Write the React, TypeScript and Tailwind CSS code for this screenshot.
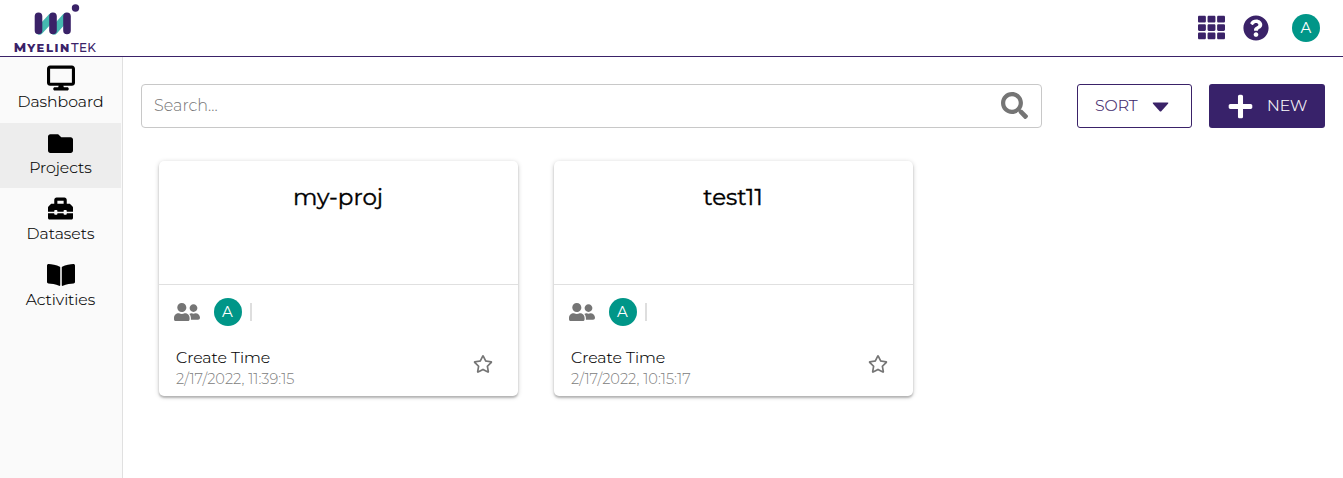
import React from 'react';
import { FaBookOpen, FaFolder, FaToolbox, FaTh, FaQuestionCircle, FaSearch, FaPlus, FaUserFriends, FaRegStar } from 'react-icons/fa';
import { FaDisplay } from 'react-icons/fa6';

function Logo() {
  return (
    <div className="flex w-[110px] flex-col items-center pt-[4px]">
      <svg width="46" height="32" viewBox="0 0 46 32" className="ml-[4px] block">
        <path d="M5.500 26.500 L18 13" stroke="#45b8b0" strokeWidth="8" strokeLinecap="round" />
        <path d="M20 26.500 L32 13" stroke="#45b8b0" strokeWidth="8" strokeLinecap="round" />
        <path d="M4.500 12.300V26.500M19 12.300V26.500M33 12.300V26.500" stroke="#3a2268" strokeWidth="7.600" strokeLinecap="round" />
        <circle cx="41.500" cy="4" r="3.700" fill="#3a2268" />
      </svg>
      <div className="mt-[4px] flex h-[14px] items-baseline whitespace-nowrap leading-[14px] text-[#3a2268]">
        <span className="text-[13px] font-extrabold tracking-[0.9px]">M</span>
        <span className="text-[11.5px] font-extrabold tracking-[1.6px]">YELIN</span>
        <span className="text-[13px] font-medium tracking-[0.3px]">T</span>
        <span className="text-[12px] font-medium tracking-[0.3px]">EK</span>
      </div>
    </div>
  );
}

function Avatar() {
  return (
    <div className="flex h-7 w-7 items-center justify-center rounded-full bg-[#009688] text-[15px] text-white">A</div>
  );
}

type NavItemProps = { label: string; icon: React.ReactNode; active?: boolean };

function NavItem({ label, icon, active }: NavItemProps) {
  return (
    <a className={`mb-px flex h-[65px] w-[121px] flex-col items-center pt-[8px] ${active ? 'bg-[#ededed]' : ''}`}>
      <span className="flex h-[26px] items-center">{icon}</span>
      <span className="text-[15.7px] leading-[22px] font-light text-black [-webkit-text-stroke:0.15px_currentColor]">{label}</span>
    </a>
  );
}

type CardProps = { title: string; date: string };

function ProjectCard({ title, date }: CardProps) {
  return (
    <article className="flex h-[235px] w-[359px] flex-col rounded-[5px] bg-white shadow-[0_2px_2px_rgba(0,0,0,0.2),0_1px_5px_rgba(0,0,0,0.2)]">
      <div className="h-[124px] border-b border-[#e0e0e0] pt-[20px] text-center">
        <h2 className="text-[23px] leading-[32px] font-normal text-black [-webkit-text-stroke:0.4px_currentColor]">{title}</h2>
      </div>
      <div className="flex h-[54px] items-center pl-[15px]">
        <FaUserFriends size={26} color="#757575" className="-mt-px" />
        <div className="ml-[14px]"><Avatar /></div>
        <div className="ml-[8px] h-[18px] w-[2px] bg-[#dedede]" />
      </div>
      <div className="flex justify-between pt-[8px] pr-[25px] pl-[17.500px]">
        <div>
          <div className="text-[15.8px] leading-[22px] font-light text-black [-webkit-text-stroke:0.15px_currentColor]">Create Time</div>
          <div className="text-[14.6px] leading-[21px] font-light text-[#808080]">{date}</div>
        </div>
        <FaRegStar size={20} color="#757575" className="mt-[7px]" />
      </div>
    </article>
  );
}

export default function App() {
  return (
    <div className="flex h-[478px] w-full flex-col overflow-hidden bg-white font-['Montserrat','Inter',sans-serif]">
      <header className="flex h-[57px] shrink-0 items-center justify-between border-b border-[#3a2268] pr-[23px]">
        <div className="h-full"><Logo /></div>
        <div className="flex items-center">
          <FaTh size={27} color="#3a2268" className="-mt-px" />
          <FaQuestionCircle size={26} color="#3a2268" className="-mt-px mr-[23px] ml-[18px]" />
          <Avatar />
        </div>
      </header>
      <div className="flex flex-1">
        <nav className="w-[123px] shrink-0 border-r border-[#e0e0e0] bg-[#fafafa]">
          <NavItem label="Dashboard" icon={<FaDisplay size={28} />} />
          <NavItem label="Projects" icon={<FaFolder size={25} className="-mt-px" />} active />
          <NavItem label="Datasets" icon={<FaToolbox size={25} className="-mt-[3px]" />} />
          <NavItem label="Activities" icon={<FaBookOpen size={28} className="-mt-[3px]" />} />
        </nav>
        <main className="flex-1 pt-[27px] pr-[18px] pl-[18px]">
          <div className="flex h-[44px]">
            <div className="flex flex-1 items-center justify-between rounded-[4px] border border-[#c8c8c8] pr-[13px] pl-[12px]">
              <span className="text-[16px] font-light text-[#757575]">Search...</span>
              <FaSearch size={27} color="#757575" className="-mt-px" />
            </div>
            <button className="ml-[35px] flex w-[115px] items-center rounded-[3px] border border-[#3a2268] pl-[17px] text-[15.7px] font-light text-[#3a2268] [-webkit-text-stroke:0.15px_currentColor]">
              SORT
              <svg width="17" height="10" viewBox="0 0 17 10" className="mt-px ml-[14px]">
                <path d="M1.500 .5h14q1.500 0 .5 1.200L9.500 9q-1 1-2 0L1 1.700Q0 .5 1.500 .5Z" fill="#3a2268" />
              </svg>
            </button>
            <button className="ml-[17px] flex w-[116px] items-center rounded-[3px] bg-[#38226a] pl-[18px] text-[15.7px] font-light text-white [-webkit-text-stroke:0.15px_currentColor]">
              <FaPlus size={27} className="mr-[13px]" />
              NEW
            </button>
          </div>
          <section className="mt-[33px] ml-[17.500px] flex gap-[36px]">
            <ProjectCard title="my-proj" date="2/17/2022, 11:39:15" />
            <ProjectCard title="test11" date="2/17/2022, 10:15:17" />
          </section>
        </main>
      </div>
    </div>
  );
}
